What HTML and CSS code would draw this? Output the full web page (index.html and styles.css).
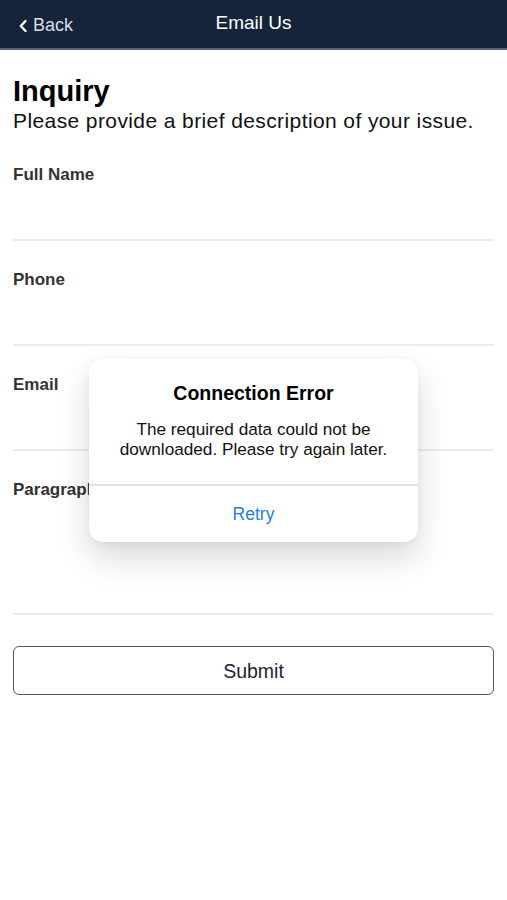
FILE: index.html
```html
<!DOCTYPE html>
<html lang="en">
<head>
<meta charset="utf-8">
<title>Email Us</title>
<link rel="stylesheet" href="styles.css">
</head>
<body>
<header class="navbar">
  <a class="back">
    <svg class="chev" width="10" height="14" viewBox="0 0 10 14"><path d="M7.5 2 L2.8 7 L7.5 12" fill="none" stroke="#fff" stroke-width="2.4" stroke-linecap="round" stroke-linejoin="round"/></svg>
    <span>Back</span>
  </a>
  <h1 class="title">Email Us</h1>
</header>
<main class="content">
  <h2 class="heading">Inquiry</h2>
  <p class="sub">Please provide a brief description of your issue.</p>
  <div class="field"><label>Full Name</label></div>
  <div class="field"><label>Phone</label></div>
  <div class="field"><label>Email</label></div>
  <div class="field tall"><label>Paragraph</label></div>
  <button class="submit">Submit</button>
</main>
<div class="dialog">
  <div class="dialog-body">
    <div class="dialog-title">Connection Error</div>
    <div class="dialog-msg">The required data could not be downloaded. Please try again later.</div>
  </div>
  <div class="dialog-action">Retry</div>
</div>
</body>
</html>
```
FILE: styles.css
```css
* { box-sizing: border-box; }
html, body { margin: 0; padding: 0; }
body {
  font-family: "Liberation Sans", Arial, sans-serif;
  background: #fff;
  color: #111;
  width: 507px;
  height: 900px;
  overflow: hidden;
}
.navbar {
  height: 50px;
  background: #15233b;
  border-bottom: 2px solid #56657a;
  display: flex;
  align-items: center;
  justify-content: center;
  position: relative;
}
.back {
  position: absolute;
  left: 18px;
  top: 15px;
  display: flex;
  align-items: center;
  gap: 5px;
  color: #d8dde6;
  font-size: 18px;
}
.chev { margin-top: 1px; }
.title {
  margin: 0;
  color: #fff;
  font-size: 19px;
  font-weight: normal;
  margin-top: -3px;
}
.content {
  padding: 0 13px;
}
.heading {
  margin: 24px 0 0;
  font-size: 29px;
  font-weight: bold;
  line-height: 34px;
  color: #000;
}
.sub {
  margin: 0;
  font-size: 21px;
  letter-spacing: 0.4px;
  line-height: 25px;
  color: #111;
}
.field {
  height: 105px;
  border-bottom: 2px solid #ececec;
  padding-top: 29px;
}
.field:first-of-type { height: 108px; padding-top: 32px; }
.field.tall { height: 164px; }
.field label {
  font-size: 17px;
  font-weight: bold;
  color: #333;
  line-height: 20px;
}
.submit {
  margin-top: 31px;
  width: 100%;
  height: 49px;
  padding-top: 3px;
  background: #fff;
  border: 1.5px solid #505a6b;
  border-radius: 6px;
  font-family: "Liberation Sans", Arial, sans-serif;
  font-size: 19.5px;
  color: #1b2436;
}
.dialog {
  position: absolute;
  left: 89px;
  top: 359px;
  width: 329px;
  height: 183px;
  background: #fff;
  border-radius: 14px;
  box-shadow: 0 16px 32px rgba(0,0,0,0.15), 0 2px 10px rgba(0,0,0,0.05);
  display: flex;
  flex-direction: column;
  text-align: center;
}
.dialog-body {
  height: 127px;
  border-bottom: 2px solid #e3e3e3;
  padding: 23px 14px 0;
}
.dialog-title {
  font-size: 19.5px;
  font-weight: bold;
  color: #000;
  line-height: 22px;
}
.dialog-msg {
  margin-top: 16px;
  font-size: 17.2px;
  line-height: 19.5px;
  color: #111;
}
.dialog-action {
  flex: 1;
  display: flex;
  align-items: center;
  justify-content: center;
  color: #1f7fe3;
  font-size: 17.5px;
}
```
